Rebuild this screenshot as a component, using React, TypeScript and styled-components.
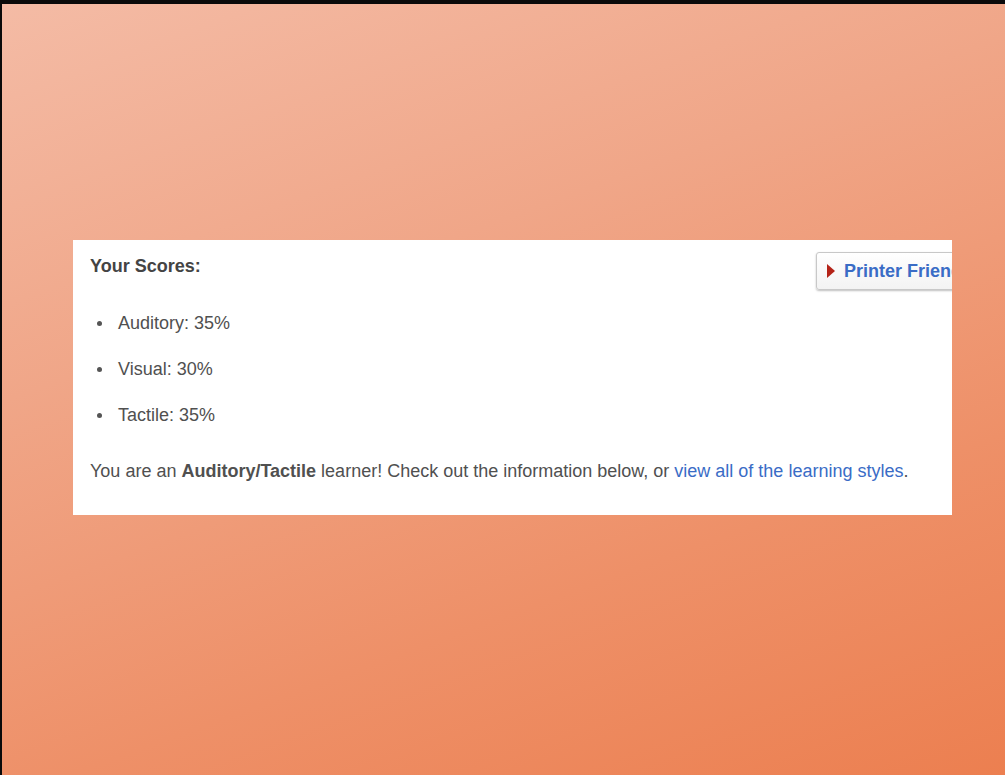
import React from "react";
import styled, { createGlobalStyle } from "styled-components";

const Global = createGlobalStyle`
  html, body { margin: 0; padding: 0; background: #000; }
  body { font-family: "Liberation Sans", Arial, sans-serif; }
`;

const Frame = styled.div`
  box-sizing: border-box;
  width: 1005px;
  height: 775px;
  border-top: 4px solid #0a0a0a;
  border-left: 2px solid #0a0a0a;
  background: linear-gradient(160deg, #f4bba5 0%, #f0a688 35%, #ee9068 70%, #ec7f50 100%);
  padding: 236px 0 0 71px;
  overflow: hidden;
`;

const Panel = styled.section`
  box-sizing: border-box;
  width: 879px;
  height: 275px;
  background: #fff;
  padding: 12px 0 0 17px;
  overflow: hidden;
  color: #505050;
  font-size: 18px;
`;

const Header = styled.div`
  display: flex;
  align-items: flex-start;
`;

const Title = styled.h2`
  flex: 0 0 726px;
  margin: 4px 0 0;
  font-size: 18px;
  font-weight: bold;
  color: #444;
`;

const PrintButton = styled.button`
  flex: 0 0 auto;
  display: flex;
  align-items: center;
  gap: 9px;
  height: 38px;
  padding: 0 12px 0 10px;
  background: linear-gradient(#ffffff, #f3f3f3);
  border: 1px solid #c8c8c8;
  border-radius: 3px;
  box-shadow: 0 1px 2px rgba(0, 0, 0, 0.25);
  font-family: "Liberation Sans", Arial, sans-serif;
  font-size: 18px;
  font-weight: bold;
  color: #3a6cc6;
  white-space: nowrap;
  cursor: pointer;
`;

const Triangle = styled.span`
  width: 0;
  height: 0;
  border-top: 7px solid transparent;
  border-bottom: 7px solid transparent;
  border-left: 8px solid #b42318;
`;

const List = styled.ul`
  margin: 23px 0 0;
  padding: 0 0 0 28px;
  list-style: none;
`;

const Item = styled.li`
  position: relative;
  line-height: 20px;
  margin-bottom: 26px;
  &::before {
    content: "";
    position: absolute;
    left: -21px;
    top: 8px;
    width: 5px;
    height: 5px;
    border-radius: 50%;
    background: #555;
  }
`;

const Summary = styled.p`
  margin: 36px 0 0;
  line-height: 20px;
  color: #505050;
`;

const Link = styled.a`
  color: #3a6cc6;
  text-decoration: none;
`;

export default function App() {
  return (
    <>
      <Global />
      <Frame>
        <Panel>
          <Header>
            <Title>Your Scores:</Title>
            <PrintButton>
              <Triangle />
              Printer Friendly
            </PrintButton>
          </Header>
          <List>
            <Item>Auditory: 35%</Item>
            <Item>Visual: 30%</Item>
            <Item>Tactile: 35%</Item>
          </List>
          <Summary>
            You are an <b>Auditory/Tactile</b> learner! Check out the information below, or{" "}
            <Link href="#">view all of the learning styles</Link>.
          </Summary>
        </Panel>
      </Frame>
    </>
  );
}
